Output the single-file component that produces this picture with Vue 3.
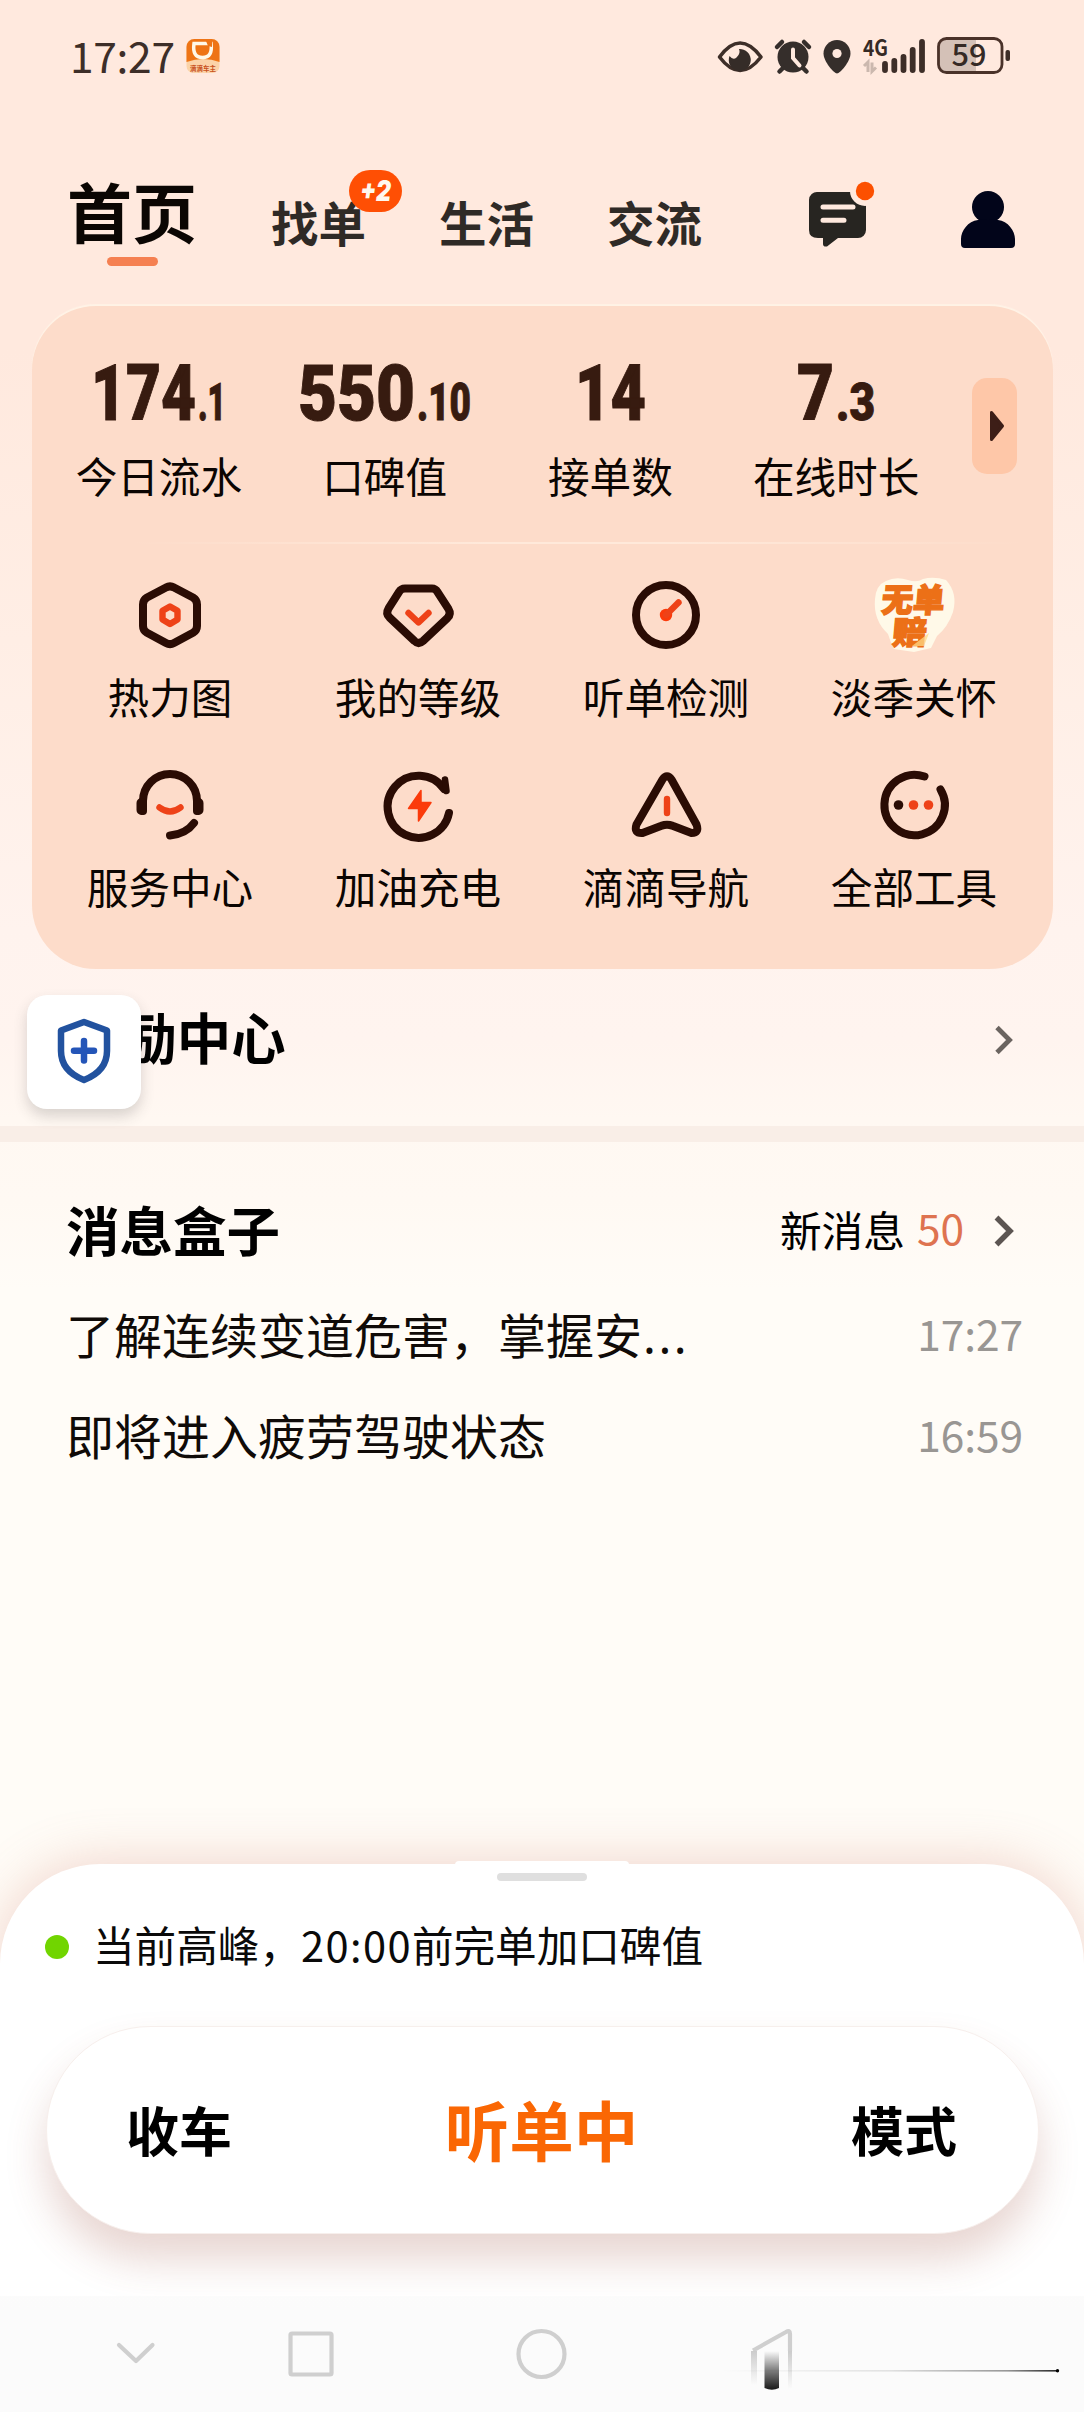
<script setup>
const stats = [
  { whole: '174', frac: '.1', ww: 105, fw: 28, label: '今日流水' },
  { whole: '550', frac: '.10', ww: 117, fw: 54, label: '口碑值' },
  { whole: '14', frac: '', ww: 71, fw: 0, label: '接单数' },
  { whole: '7', frac: '.3', ww: 37, fw: 39, label: '在线时长' },
]
const tools = [
  { id: 'heat', label: '热力图' },
  { id: 'level', label: '我的等级' },
  { id: 'check', label: '听单检测' },
  { id: 'care', label: '淡季关怀' },
  { id: 'service', label: '服务中心' },
  { id: 'energy', label: '加油充电' },
  { id: 'nav', label: '滴滴导航' },
  { id: 'all', label: '全部工具' },
]
const messages = [
  { text: '了解连续变道危害，掌握安', more: true, time: '17:27' },
  { text: '即将进入疲劳驾驶状态', more: false, time: '16:59' },
]
</script>

<template>
  <div class="phone">
    <header class="status">
      <span class="clock">17:27</span>
      <svg class="app-icon" width="34" height="36" viewBox="0 0 34 36">
        <rect x="0.5" y="1" width="33" height="34" rx="7" fill="#fbd3a8" />
        <path d="M0.5 24V9a8 8 0 0 1 8-8h17a8 8 0 0 1 8 8v15q-16-6-33 0z" fill="#ee7415" />
        <path d="M8 5.5h17q2 14-8.500 14T8 5.500z" fill="none" stroke="#fff8e8" stroke-width="3.500" />
        <path d="M20 3h6v6l-4-1z" fill="#ee7415" />
        <text x="17" y="32.500" text-anchor="middle" textLength="26" lengthAdjust="spacingAndGlyphs" font-size="7" font-weight="700" fill="#c8501c">滴滴车主</text>
      </svg>
      <svg class="status-icons" width="300" height="44" viewBox="715 35 300 44">
        <path d="M719.500 57Q740 29 761 57Q740 84 719.500 57Z" fill="none" stroke="#3d2e28" stroke-width="3.600" stroke-linejoin="round" />
        <path d="M739 49a11 11 0 1 1-9.500 7q3.500 4.500 7 1.500q4.500-4 2.500-8.500z" fill="#352c28" />
        <circle cx="793" cy="57" r="15.500" fill="#352e2b" />
        <path d="M777 47l5-5M809 47l-5-5M783 68l-3.500 3.500M803 68l3.500 3.500" stroke="#352e2b" stroke-width="4.500" stroke-linecap="round" />
        <path d="M793 49.500v8.500l6.500 7.500" fill="none" stroke="#ffe9de" stroke-width="4" stroke-linecap="round" />
        <path d="M837 73.500c-3 0-13.500-12-13.500-20a13.500 13.500 0 0 1 27 0c0 8-10.500 20-13.500 20z" fill="#352e2b" />
        <circle cx="837" cy="53.500" r="4.600" fill="#ffe9de" />
        <text x="863" y="55.500" textLength="25" lengthAdjust="spacingAndGlyphs" font-size="22.500" font-weight="600" fill="#352a25">4G</text>
        <path d="M864 66l4-4v10M876 67.500l-4 4v-9" fill="none" stroke="#cbb8ae" stroke-width="3" />
        <path d="M885 64v6M894.300 61v9M903.500 57v13M912.700 50v20M922 42v28" stroke="#3d2e28" stroke-width="5.800" stroke-linecap="round" />
        <path d="M947 39h29v33h-29a8 8 0 0 1-8-8v-17a8 8 0 0 1 8-8z" fill="#d4c1b7" />
        <rect x="938.500" y="38.500" width="63.500" height="34" rx="8" fill="none" stroke="#4a3229" stroke-width="2.800" />
        <rect x="1005.500" y="50" width="4.500" height="11" rx="2" fill="#3d2e28" />
        <text x="951.500" y="66.300" textLength="35" lengthAdjust="spacingAndGlyphs" font-size="30" font-weight="500" fill="#352a25">59</text>
      </svg>
    </header>

    <nav class="tabs">
      <div class="tab active">首页<i class="underline"></i></div>
      <div class="tab">找单
        <span class="badge"><svg width="40" height="28" viewBox="0 0 40 28"><text x="4" y="24" class="badge-text" font-size="28" textLength="31" lengthAdjust="spacingAndGlyphs">+2</text></svg></span>
      </div>
      <div class="tab">生活</div>
      <div class="tab">交流</div>
      <svg class="chat" width="76" height="72" viewBox="806 178 76 72">
        <path d="M818 192h40a8 8 0 0 1 8 8v30a8 8 0 0 1-8 8h-20l-11 8.500q-4 .5-4-2.500v-6h-5q-9 0-9-8v-30a8 8 0 0 1 9-8z" fill="#272521" />
        <path d="M823 207h30M823 220.300h21" stroke="#ffe9de" stroke-width="5" stroke-linecap="round" />
        <circle cx="865" cy="191" r="15" fill="#ffe9de" />
        <circle cx="865" cy="191" r="9.200" fill="#fc5000" />
      </svg>
      <svg class="user" width="56" height="58" viewBox="960 190 56 58">
        <circle cx="988" cy="207" r="16" fill="#02051a" />
        <path d="M961 244v-5c0-8 7-18 17-19q10-2 20 0c10 1 17 11 17 19v5q0 4-4 4h-46q-4 0-4-4z" fill="#02051a" />
      </svg>
    </nav>

    <section class="card">
      <div class="stats">
        <div v-for="s in stats" :key="s.label" class="stat">
          <div class="figure">
            <svg :width="s.ww" height="60" :viewBox="`0 0 ${s.ww} 60`">
              <text x="0" y="57.500" :textLength="s.ww" lengthAdjust="spacingAndGlyphs" font-size="77" class="num">{{ s.whole }}</text>
            </svg>
            <svg v-if="s.frac" :width="s.fw" height="60" :viewBox="`0 0 ${s.fw} 60`">
              <text x="0" y="57.500" :textLength="s.fw" lengthAdjust="spacingAndGlyphs" font-size="52" class="num">{{ s.frac }}</text>
            </svg>
          </div>
          <div class="label">{{ s.label }}</div>
        </div>
        <button class="more">
          <svg width="16" height="32" viewBox="0 0 16 32"><path d="M2.500 2.500v27L13.500 16z" fill="#3d1e17" stroke="#3d1e17" stroke-width="3" stroke-linejoin="round" /></svg>
        </button>
      </div>
      <div class="divider"></div>
      <div class="tools">
        <div v-for="t in tools" :key="t.id" class="tool">
          <svg class="tool-icon" width="84" height="80" viewBox="-2 0 84 80">
            <g v-if="t.id === 'heat'">
              <path class="d" d="M36 12.500Q40 10.200 44 12.500L63 22.500Q67 24.800 67 29.500V51Q67 55.500 63 57.800L44 68Q40 70.200 36 68L17 57.800Q13 55.500 13 51V29.500Q13 24.800 17 22.500Z" />
              <path class="o" d="M40 31.500l7.500 4.300v8.800L40 49l-7.500-4.400v-8.800z" />
            </g>
            <g v-else-if="t.id === 'level'">
              <path class="d" d="M27 13.500H54Q57.500 13.500 59.500 17L70.500 34Q73.500 39 69.500 43L45 66Q40.500 70 36.500 66L11.500 42.500Q7.500 38.500 10.500 33.500L21 17Q23 13.500 27 13.500Z" />
              <path class="o" d="M30.500 38L40.500 47.500L50.500 38" />
            </g>
            <g v-else-if="t.id === 'check'">
              <circle class="d" cx="40" cy="40" r="30" />
              <circle cx="40" cy="40" r="6.200" fill="#fb3b0b" />
              <path class="o" d="M40 40L52.500 27.500" />
            </g>
            <g v-else-if="t.id === 'care'">
              <path d="M12 6Q22 1 34 5Q43 8 49 4Q60 1 72 5Q84 18 79 37Q74 52 63 61L57 73L40 77L20 74Q16 66 14 59Q-1 45 1 24Q2 10 12 6Z" fill="#fff9e8" />
              <g transform="skewX(-5)">
                <text x="10" y="36.500" class="sticker" textLength="63" lengthAdjust="spacingAndGlyphs" font-size="33">无单</text>
                <text x="24" y="69" class="sticker" textLength="34" lengthAdjust="spacingAndGlyphs" font-size="32">赔</text>
              </g>
              <path d="M38 71l17-13-5 13z" fill="#ffd987" opacity=".75" />
            </g>
            <g v-else-if="t.id === 'service'">
              <path class="d" d="M13 46V36A27 27 0 0 1 67 36V46" />
              <path class="ear" d="M11.500 38V45M68.500 38V45" />
              <path class="o" d="M29.500 42.500Q40 50.500 50.500 42.500" />
              <path class="d" d="M40 70.500Q56 69 64 58" />
            </g>
            <g v-else-if="t.id === 'energy'">
              <path class="d" d="M66 24A31 31 0 1 0 71 48" />
              <path class="nub" d="M67 14.500L68.500 26" />
              <path d="M43 25.500L30.500 43.500H40.500V56L53 37.500H43Z" fill="#fb3b0b" stroke="#fb3b0b" stroke-width="1.500" stroke-linejoin="round" />
            </g>
            <g v-else-if="t.id === 'nav'">
              <path class="d" d="M36.500 14.500Q41 8 45.500 14.500L70.500 59.500Q73.500 68 65.500 68L46.500 60.800Q41 58.500 35.500 60.800L16.500 68Q7.500 68.500 10.500 59.500Z" />
              <path class="o" d="M41 34V48" />
            </g>
            <g v-else>
              <path class="d" d="M50.500 11.500A30.200 30.200 0 1 0 66.500 24.500" />
              <circle cx="24.500" cy="40" r="4.800" fill="#2a0c04" />
              <circle cx="39.500" cy="40" r="4.800" fill="#ee4218" />
              <circle cx="54.500" cy="40" r="4.800" fill="#ee4218" />
            </g>
          </svg>
          <div class="label">{{ t.label }}</div>
        </div>
      </div>
    </section>

    <section class="reward">
      <h2 class="reward-title">奖励中心</h2>
      <svg class="chev" width="22" height="32" viewBox="0 0 22 32"><path d="M4 3.500L16.500 16L4 28.500" fill="none" stroke="#6b6460" stroke-width="4.800" /></svg>
      <div class="shield">
        <svg width="58" height="70" viewBox="0 0 58 70">
          <path d="M29 5L52 13.500V34Q52 54 29 63Q6 54 6 34V13.500Z" fill="none" stroke="#22529f" stroke-width="6.500" stroke-linejoin="round" />
          <path d="M29 24V43.500M19 33.800H39" stroke="#2455b8" stroke-width="6.500" stroke-linecap="round" />
        </svg>
      </div>
    </section>
    <div class="band"></div>

    <section class="inbox">
      <div class="inbox-head">
        <h2>消息盒子</h2>
        <span class="new">新消息</span>
        <span class="count">50</span>
        <svg class="chev" width="22" height="32" viewBox="0 0 22 32"><path d="M3.500 2.500L17 16L3.500 29.500" fill="none" stroke="#5c5552" stroke-width="5.500" /></svg>
      </div>
      <div v-for="m in messages" :key="m.time" class="msg">
        <span>{{ m.text }}<span v-if="m.more" class="dots">...</span></span>
        <time>{{ m.time }}</time>
      </div>
    </section>

    <section class="sheet">
      <div class="grip"><i></i></div>
      <div class="notice"><i class="dot"></i><span>当前高峰，<em>20:00</em>前完单加口碑值</span></div>
      <div class="pill">
        <b>收车</b>
        <strong>听单中</strong>
        <b>模式</b>
      </div>
      <footer class="sysnav">
        <svg width="1084" height="116" viewBox="0 2296 1084 116">
          <defs>
            <linearGradient id="smear" x1="0" y1="0" x2="0" y2="1"><stop offset="0" stop-color="#000" stop-opacity="0" /><stop offset=".5" stop-color="#000" stop-opacity=".5" /><stop offset="1" stop-color="#000" stop-opacity=".9" /></linearGradient>
            <linearGradient id="fade" x1="0" y1="0" x2="0" y2="1"><stop offset="0" stop-color="#ccc" /><stop offset="1" stop-color="#ccc" stop-opacity="0" /></linearGradient>
            <linearGradient id="side" x1="0" y1="0" x2="1" y2="0"><stop offset="0" stop-color="#000" stop-opacity="0" /><stop offset=".5" stop-color="#000" stop-opacity=".1" /><stop offset=".85" stop-color="#000" stop-opacity=".4" /><stop offset="1" stop-color="#000" stop-opacity=".85" /></linearGradient>
          </defs>
          <g fill="none" stroke="#cfcfcf" stroke-width="4.200" stroke-linecap="round" stroke-linejoin="round">
            <path d="M119 2345L136 2361L152.500 2345" />
            <rect x="290.500" y="2333.500" width="41" height="41" rx="1.500" />
            <circle cx="541.500" cy="2354" r="23" />
            <path d="M753 2350.500L786 2332Q790 2329.500 790 2334V2351" stroke-linecap="butt" />
          </g>
          <rect x="751" y="2351" width="6" height="34" fill="url(#fade)" />
          <rect x="788" y="2351" width="4" height="38" fill="url(#fade)" />
          <path d="M764.500 2351h14.500v37q-7 3.500-14.500 0z" fill="url(#smear)" />
          <rect x="720" y="2370" width="338" height="1.600" fill="url(#side)" />
          <circle cx="1057.500" cy="2370.700" r="1.700" fill="#000" />
        </svg>
      </footer>
    </section>
  </div>
</template>

<style>
body {
  margin: 0;
}
</style>

<style scoped>
.phone {
  width: 1084px;
  height: 2412px;
  overflow: hidden;
  display: flex;
  flex-direction: column;
  font-family: "Noto Sans CJK SC", "Noto Sans", sans-serif;
  color: #0b0502;
  background: linear-gradient(180deg, #ffe9de 0, #ffe9de 350px, #ffeee5 640px, #fff3ee 930px, #fff4ef 1040px, #fff8f2 1120px, #fff9f3 1200px, #fffcf7 1290px, #fffcf7 100%);
}
svg {
  overflow: visible;
}
.status {
  height: 112px;
  display: flex;
  align-items: center;
  box-sizing: border-box;
  padding: 0 69px 0 70px;
  flex: none;
}
.clock {
  font-size: 42.500px;
  line-height: 60px;
  color: #3d2e28;
  letter-spacing: -0.3px;
  width: 116px;
  margin-top: -3px;
}
.app-icon {
  margin-top: 0;
}
.status-icons {
  margin-left: auto;
  margin-top: 1px;
}
.tabs {
  height: 194px;
  display: flex;
  box-sizing: border-box;
  padding-left: 67px;
  flex: none;
}
.tab {
  position: relative;
  font-size: 47.500px;
  font-weight: 700;
  line-height: 60px;
  color: #2f2a26;
  width: 95px;
  margin: 80px 73px 0 0;
  white-space: nowrap;
}
.tab.active {
  font-size: 65px;
  line-height: 80px;
  height: 80px;
  color: #0b0603;
  width: 130px;
  margin: 58px 74px 0 0;
}
.underline {
  position: absolute;
  left: 40px;
  top: 87px;
  width: 51px;
  height: 9px;
  border-radius: 5px;
  background: #f58051;
}
.badge {
  position: absolute;
  left: 78px;
  top: -22px;
  width: 53px;
  height: 42px;
  border-radius: 21px;
  background: #ff4f04;
  display: flex;
  align-items: center;
  justify-content: center;
}
.badge-text {
  font-family: Inter, Roboto, sans-serif;
  font-weight: 900;
  font-style: italic;
  fill: #fff8ee;
}
.chat {
  margin: 66px 0 0 31px;
}
.user {
  margin: 78px 0 0 78px;
}
.card {
  width: 1021px;
  height: 663px;
  margin: 0 0 0 31.500px;
  box-sizing: border-box;
  border-radius: 64px;
  background: #fddcca;
  box-shadow: 0 -2px 1px rgba(255, 244, 232, 0.85);
  flex: none;
}
.stats {
  height: 236px;
  display: flex;
  padding-left: 14.500px;
}
.stat {
  width: 225.750px;
  display: flex;
  flex-direction: column;
  align-items: center;
}
.figure {
  display: flex;
  gap: 2px;
  margin-top: 56px;
  height: 60px;
}
.num {
  font-family: Roboto, Inter, sans-serif;
  font-weight: 900;
  fill: #371b10;
  stroke: #371b10;
  stroke-width: 1;
}
.label {
  font-size: 41.600px;
  line-height: 60px;
  white-space: nowrap;
}
.stat .label {
  margin-top: 23px;
}
.more {
  width: 45px;
  height: 96px;
  margin: 72px 0 0 23px;
  padding: 0;
  border: 0;
  border-radius: 15px;
  background: #fec7a8;
  display: flex;
  align-items: center;
  justify-content: center;
}
.more svg {
  margin-left: 4px;
}
.divider {
  height: 2px;
  margin: 0 30px 0 100px;
  background: linear-gradient(90deg, rgba(255, 236, 220, 0), #ffe9da 40%, #ffe9da 60%, rgba(255, 236, 220, 0));
}
.tools {
  display: grid;
  grid-template-columns: repeat(4, 248px);
  padding: 31px 0 0 14.500px;
}
.tool {
  height: 190px;
  display: flex;
  flex-direction: column;
  align-items: center;
}
.tool .label {
  margin-top: 11px;
}
.d {
  fill: none;
  stroke: #2a0c04;
  stroke-width: 8;
  stroke-linecap: round;
  stroke-linejoin: round;
}
.ear {
  stroke: #2a0c04;
  stroke-width: 10;
  stroke-linecap: round;
}
.nub {
  stroke: #2a0c04;
  stroke-width: 6.500;
  stroke-linecap: round;
}
.o {
  fill: none;
  stroke: #ee4218;
  stroke-width: 6.400;
  stroke-linecap: round;
  stroke-linejoin: round;
}
.sticker {
  font-weight: 900;
  fill: #ec7017;
  stroke: #ec7017;
  stroke-width: 1.400;
}
.reward {
  position: relative;
  height: 157px;
  display: flex;
  justify-content: space-between;
  box-sizing: border-box;
  padding: 0 69px 0 68px;
  flex: none;
}
h2 {
  margin: 0;
  font-size: 53.500px;
  line-height: 70px;
  font-weight: 700;
  color: #000;
  white-space: nowrap;
}
.reward-title {
  font-size: 54.400px;
  margin-top: 32px;
}
.reward .chev {
  margin-top: 55px;
}
.shield {
  position: absolute;
  left: 27px;
  top: 26px;
  width: 114px;
  height: 114px;
  border-radius: 20px;
  background: #fff;
  box-shadow: 0 7px 14px rgba(60, 60, 60, 0.2);
  display: flex;
  align-items: center;
  justify-content: center;
}
.band {
  height: 16px;
  background: #f9eee7;
  flex: none;
}
.inbox {
  height: 722px;
  flex: none;
  box-sizing: border-box;
  padding: 51px 61px 0 66px;
}
.inbox-head {
  display: flex;
  align-items: center;
  height: 72px;
  margin-bottom: 17px;
  padding-right: 8px;
}
.new {
  margin-left: auto;
  font-size: 41.700px;
  color: #000;
  margin-top: -1px;
}
.count {
  font-size: 42.500px;
  color: #de7350;
  width: 74px;
  padding-left: 12px;
  margin-top: -5px;
  box-sizing: border-box;
}
.inbox .chev {
  margin: 4px 0 0 14px;
}
.msg {
  height: 101px;
  display: flex;
  justify-content: space-between;
  align-items: center;
  font-size: 48px;
  white-space: nowrap;
  color: #100b08;
}
.dots {
  font-family: "Noto Sans", sans-serif;
  letter-spacing: 2.500px;
  margin-left: 1px;
}
.msg time {
  font-size: 42.500px;
  letter-spacing: -0.1px;
  color: #999693;
}
.sheet {
  height: 548px;
  flex: none;
  border-radius: 100px 100px 0 0;
  background: #fff;
  box-shadow: 0 -2px 52px rgba(205, 120, 100, 0.3);
  display: flex;
  flex-direction: column;
}
.grip {
  width: 174px;
  height: 20px;
  margin: -3px auto 0;
  background: #fff;
  border-radius: 4px 4px 0 0;
  display: flex;
  justify-content: center;
  align-items: flex-end;
  flex: none;
}
.grip i {
  width: 90px;
  height: 8px;
  border-radius: 4px;
  background: #dfdfdf;
}
.notice {
  height: 60px;
  margin-top: 34px;
  padding-left: 45px;
  display: flex;
  align-items: center;
  font-size: 41.600px;
  line-height: 60px;
  flex: none;
  color: #0a0a0a;
}
.notice span {
  margin-top: -2px;
}
.notice em {
  font-style: normal;
  letter-spacing: 1.400px;
}
.dot {
  width: 24px;
  height: 24px;
  border-radius: 50%;
  background: #71d500;
  margin: 4px 24px 0 0;
}
.pill {
  width: 993px;
  height: 208px;
  margin: 51px 0 0 46px;
  box-sizing: border-box;
  border-radius: 104px;
  background: #fff;
  border: 1px solid #f7efec;
  box-shadow: 0 26px 40px rgba(150, 70, 50, 0.22);
  display: flex;
  justify-content: space-between;
  align-items: center;
  padding: 0 81px 2px 79px;
  flex: none;
}
.pill b {
  font-size: 53px;
  color: #000;
}
.pill strong {
  font-size: 64.500px;
  color: #fa6704;
  margin-top: -2px;
}
.sysnav {
  margin-top: auto;
  height: 116px;
  background: linear-gradient(180deg, rgba(251, 251, 251, 0.94), #fbfbfb 12px);
  flex: none;
}
.sysnav svg {
  display: block;
}
</style>
